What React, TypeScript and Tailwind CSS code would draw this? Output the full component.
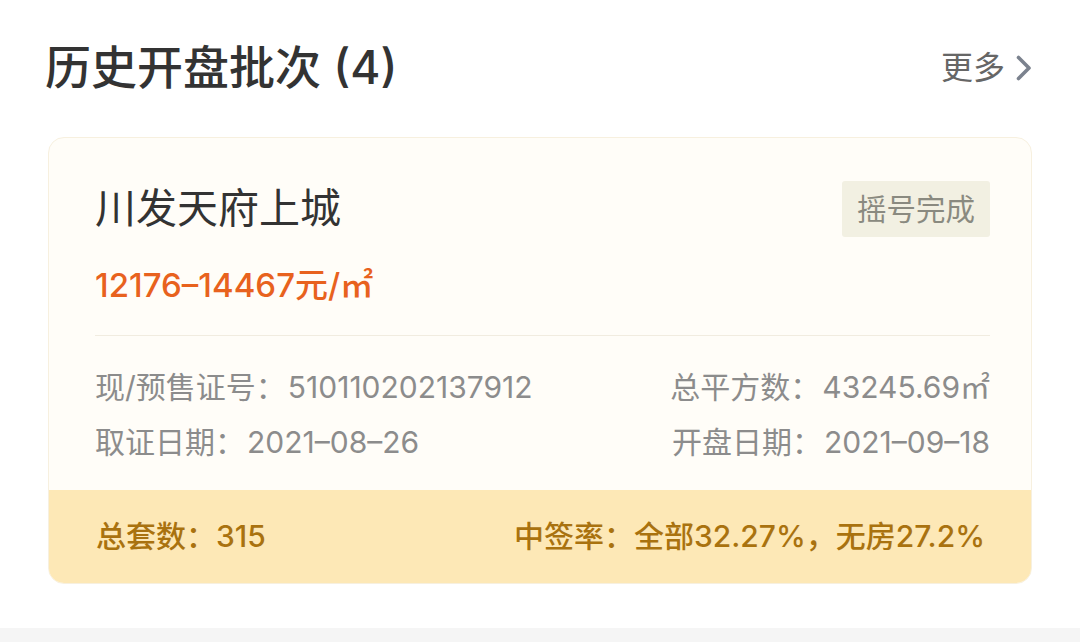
const font = {
  fontFamily: '"Inter", "Noto Sans CJK SC", "Noto Sans", sans-serif',
};

function Field({ label, value }: { label: string; value: string }) {
  return (
    <span className="flex items-baseline text-[30px]">
      <span>{label}：</span>
      <span className="ml-[2px]">{value}</span>
    </span>
  );
}

function InfoRow({ left, right }: { left: [string, string]; right: [string, string] }) {
  return (
    <div className="flex h-[40px] items-center justify-between text-[#8c8c8c]">
      <Field label={left[0]} value={left[1]} />
      <Field label={right[0]} value={right[1]} />
    </div>
  );
}

export default function App() {
  return (
    <div className="flex h-[642px] w-[1080px] flex-col bg-white" style={font}>
      <div className="flex h-[137px] items-center justify-between pb-[2px] pl-[45px] pr-[47px]">
        <h2 className="text-[46px] font-medium text-[#333333]">历史开盘批次 (4)</h2>
        <div className="flex items-center text-[32px] text-[#666666]">
          <span>更多</span>
          <svg width="18" height="28" viewBox="0 0 18 28" className="ml-[10px]" fill="none">
            <polyline
              points="3.5,3.5 14,14 3.5,24.5"
              stroke="#7b828e"
              strokeWidth="3.6"
              strokeLinecap="round"
              strokeLinejoin="round"
            />
          </svg>
        </div>
      </div>

      <div className="mx-[48px] overflow-hidden rounded-[16px] border border-[#f7f0df] bg-[#fffdf8]">
        <div className="pb-[28px] pl-[46px] pr-[41px] pt-[43px]">
          <div className="flex h-[56px] items-center justify-between">
            <span className="text-[41px] text-[#333333]">川发天府上城</span>
            <span className="flex h-[56px] items-center rounded-[3px] bg-[#f2f0e2] px-[15px] text-[29.5px] text-[#8a8a80]">
              摇号完成
            </span>
          </div>
          <div className="mt-[29px] flex h-[40px] items-center text-[33px] font-medium text-[#e8621e]">
            12176–14467元/㎡
          </div>
          <div className="mt-[29px] h-px bg-[#f1ece0]" />
          <div className="mt-[31px] flex flex-col gap-[15px]">
            <InfoRow left={["现/预售证号", "510110202137912"]} right={["总平方数", "43245.69㎡"]} />
            <InfoRow left={["取证日期", "2021–08–26"]} right={["开盘日期", "2021–09–18"]} />
          </div>
        </div>
        <div className="flex h-[93px] items-center justify-between bg-[#fde8b6] pl-[47px] pr-[46px] font-medium text-[#a9720f]">
          <span className="text-[30px]">总套数：315</span>
          <span className="text-[30px]">中签率：全部32.27%，无房27.2%</span>
        </div>
      </div>

      <div className="mt-auto h-[14px] bg-[#f5f5f5]" />
    </div>
  );
}
